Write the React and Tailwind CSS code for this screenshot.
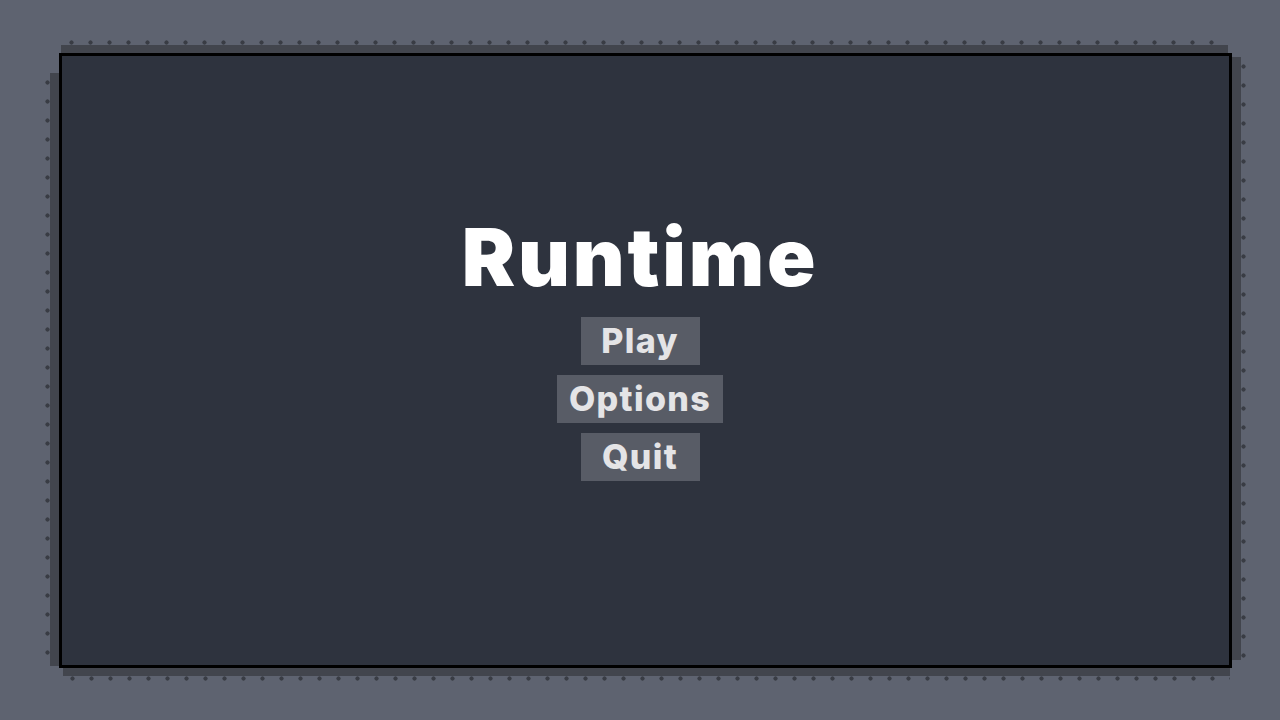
const menuItems = [
  { label: "Play", width: "w-[119px]" },
  { label: "Options", width: "w-[166px]" },
  { label: "Quit", width: "w-[119px]" },
];

// staggered pixel dots that sit outside the frame bands
const dotsX =
  "bg-[radial-gradient(circle,#393c44_1.8px,transparent_2.4px)] bg-[length:19px_5px]";
const dotsY =
  "bg-[radial-gradient(circle,#393c44_1.8px,transparent_2.4px)] bg-[length:5px_19px]";

const MenuButton = ({ label, width }) => (
  <button
    className={`${width} h-12 bg-[#585c66] text-[#e4e4e6] text-[34px] font-extrabold leading-none tracking-[0.04em]`}
  >
    {label}
  </button>
);

export default function App() {
  return (
    <div
      className="w-full h-[720px] bg-[#5e6370] flex items-center justify-center"
      style={{ fontFamily: "Inter, 'DejaVu Sans', sans-serif" }}
    >
      <div className="relative ml-[11px]">
        <div className={`absolute left-[3px] right-[4px] -top-[13px] h-[5px] ${dotsX}`} />
        <div className={`absolute -left-[14px] top-[20px] bottom-[2px] w-[5px] ${dotsY}`} />
        <div className={`absolute -right-[14px] top-[4px] bottom-[8px] w-[5px] ${dotsY}`} />
        <div className={`absolute left-[4px] right-[2px] -bottom-[13px] h-[5px] ${dotsX}`} />

        <div className="relative w-[1173px] h-[615px] bg-[#2e333e] border-[3px] border-black shadow-[-1px_-11px_0_-3px_#42454d,-20px_9px_0_-11px_#42454d,15px_-2px_0_-6px_#42454d,1px_11px_0_-3px_#42454d] flex flex-col items-center pt-[161px] pr-[11px]">
          <h1 className="text-white text-[80px] font-black leading-none tracking-[0.035em]">
            Runtime
          </h1>
          <div className="mt-[20px] flex flex-col items-center gap-[10px]">
            {menuItems.map((item) => (
              <MenuButton key={item.label} {...item} />
            ))}
          </div>
        </div>
      </div>
    </div>
  );
}
